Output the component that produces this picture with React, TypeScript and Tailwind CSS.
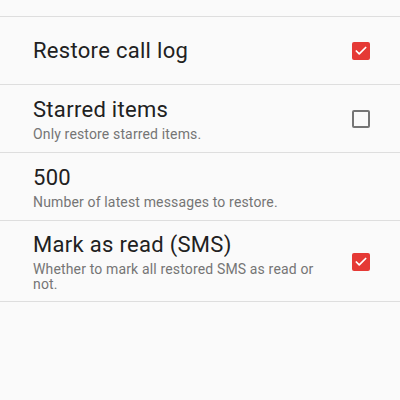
import { Check } from "lucide-react";

type Pref = {
    title: string;
    summary?: string;
    checked?: boolean;
};

const prefs: Pref[] = [
    { title: "Restore call log", checked: true },
    { title: "Starred items", summary: "Only restore starred items.", checked: false },
    { title: "500", summary: "Number of latest messages to restore." },
    { title: "Mark as read (SMS)", summary: "Whether to mark all restored SMS as read or not.", checked: true },
];

function Checkbox({ checked }: { checked: boolean }) {
    if (checked) {
        return (
            <div className="w-[18px] h-[18px] rounded-[2px] bg-[#e53935] flex items-center justify-center">
                <Check className="w-[14px] h-[14px] text-white" strokeWidth={3} />
            </div>
        );
    }
    return <div className="w-[18px] h-[18px] rounded-[2px] border-2 border-[#757575]" />;
}

function PrefRow({ pref }: { pref: Pref }) {
    return (
        <div className="flex items-center min-h-[68px] pl-[33px] pr-[30px] pt-[10px] pb-[9px] border-b border-[#dedede]">
            <div className="flex-1 pr-[20px]">
                <div className="text-[22px] leading-[28px] tracking-[0.3px] text-[#212121]">{pref.title}</div>
                {pref.summary && (
                    <div className="mt-[3px] text-[14px] leading-[15px] tracking-[0.15px] text-[#757575]">{pref.summary}</div>
                )}
            </div>
            {pref.checked !== undefined && <Checkbox checked={pref.checked} />}
        </div>
    );
}

export default function App() {
    return (
        <div className="w-[400px] h-[400px] bg-[#fafafa] overflow-hidden" style={{ fontFamily: "Roboto, 'Noto Sans', sans-serif" }}>
            <div className="h-[17px] border-b border-[#dedede]" />
            {prefs.map((p) => (
                <PrefRow key={p.title} pref={p} />
            ))}
        </div>
    );
}
